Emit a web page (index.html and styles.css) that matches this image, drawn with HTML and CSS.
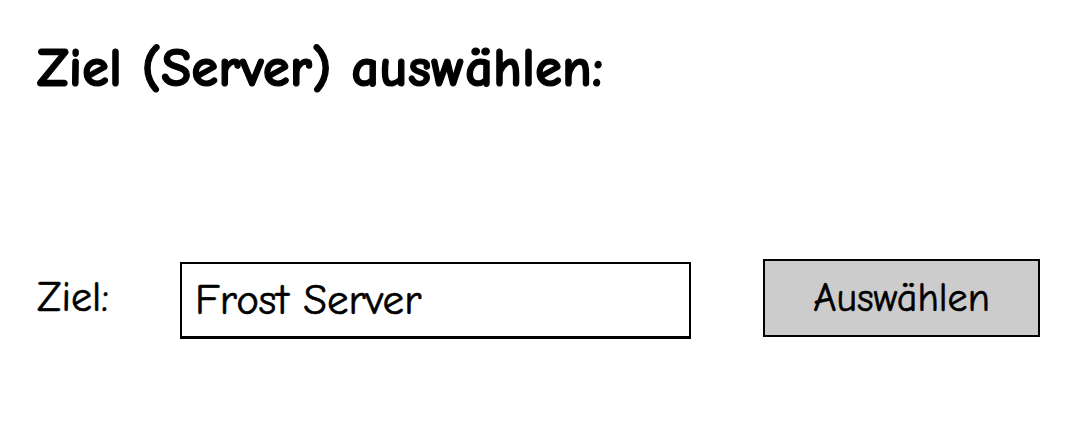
FILE: index.html
```html
<!DOCTYPE html>
<html lang="de">
<head>
<meta charset="utf-8">
<link rel="stylesheet" href="styles.css">
</head>
<body>
<main class="page">
  <h1 class="title">Ziel (Server) auswählen:</h1>
  <div class="row">
    <span class="label">Ziel:</span>
    <div class="field">Frost Server</div>
    <button class="btn">Auswählen</button>
  </div>
</main>
</body>
</html>
```

FILE: styles.css
```css
html, body {
  margin: 0;
  padding: 0;
  background: #ffffff;
}
body {
  width: 1090px;
  height: 422px;
  overflow: hidden;
  font-family: "Comic Sans MS", "Comic Neue", "Noto Sans", sans-serif;
  color: #000;
  -webkit-text-stroke: 0.6px #000;
}
.page {
  padding: 36px 0 0 37px;
}
.title {
  margin: 0;
  font-size: 55px;
  font-weight: bold;
  line-height: 64px;
  -webkit-text-stroke: 1.2px #000;
}
.row {
  margin-top: 159px;
  display: flex;
  align-items: flex-start;
}
.label {
  width: 143px;
  font-size: 42px;
  line-height: 78px;
}
.field {
  box-sizing: border-box;
  margin-top: 3px;
  width: 511px;
  height: 77px;
  border: 2px solid #000;
  border-bottom-width: 3px;
  padding-left: 13px;
  font-size: 43px;
  display: flex;
  align-items: center;
}
.btn {
  box-sizing: border-box;
  margin-left: 72px;
  width: 277px;
  height: 78px;
  border: 2px solid #000;
  background: #cccccc;
  font-family: inherit;
  font-size: 40px;
  color: #000;
  padding: 0;
  -webkit-text-stroke: 0.6px #000;
}
```
